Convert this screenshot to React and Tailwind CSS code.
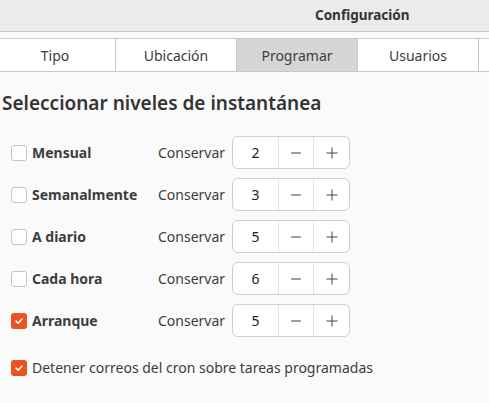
import React from "react";

const rows = [
  { label: "Mensual", value: 2, checked: false },
  { label: "Semanalmente", value: 3, checked: false },
  { label: "A diario", value: 5, checked: false },
  { label: "Cada hora", value: 6, checked: false },
  { label: "Arranque", value: 5, checked: true },
];

function Check({ checked }) {
  return checked ? (
    <div className="w-4 h-4 rounded-[3px] bg-[#e95420] flex items-center justify-center shrink-0">
      <svg width="10" height="10" viewBox="0 0 10 10">
        <path d="M2 5.2 L4.2 7.2 L8 3" fill="none" stroke="white" strokeWidth="1.6" strokeLinecap="round" strokeLinejoin="round" />
      </svg>
    </div>
  ) : (
    <div className="w-4 h-4 rounded-[3px] border border-[#c4c4c4] bg-white shrink-0" />
  );
}

export default function App() {
  return (
    <div className="w-[489px] h-[403px] bg-[#fafafa] text-[#3d3d3d] overflow-hidden" style={{ fontFamily: '"Noto Sans", "Open Sans", sans-serif' }}>
      <div className="h-[32px] bg-[#ebebeb] border-b border-[#c8c8c8] flex items-center pl-[315px] text-[13.5px] font-bold text-[#333]">
        Configuración
      </div>
      <div className="h-[7px] bg-[#fafafa] border-b border-[#c8c8c8]" />
      <div className="h-[33px] flex ml-[-5px] border-b border-[#c8c8c8] bg-white">
        {["Tipo", "Ubicación", "Programar", "Usuarios", ""].map((t, i) => (
          <div
            key={i}
            className={`w-[121px] shrink-0 border-r border-[#c8c8c8] flex items-center justify-center text-[14px] ${i === 2 ? "bg-[#d6d6d6]" : "bg-white"}`}
          >
            {t}
          </div>
        ))}
      </div>
      <div className="pl-[2px] pt-[18px] text-[19px] font-semibold leading-[26px] text-[#333]">
        Seleccionar niveles de instantánea
      </div>
      <div className="flex flex-col gap-[9px] mt-[20px] pl-[11px]">
        {rows.map((r) => (
          <div key={r.label} className="flex items-center h-[33px]">
            <Check checked={r.checked} />
            <span className="ml-[5px] w-[126px] text-[14px] font-bold">{r.label}</span>
            <span className="w-[74px] text-[14px]">Conservar</span>
            <div className="flex h-[33px] w-[118px] border border-[#cfcfcf] rounded-[6px] bg-white text-[14px]">
              <div className="w-[46px] flex items-center justify-center text-[#222] border-r border-[#e4e4e4]">{r.value}</div>
              <div className="w-[35px] flex items-center justify-center border-r border-[#e4e4e4]">
                <svg width="12" height="12" viewBox="0 0 12 12"><path d="M1 6 H11" stroke="#444" strokeWidth="1" /></svg>
              </div>
              <div className="flex-1 flex items-center justify-center">
                <svg width="12" height="12" viewBox="0 0 12 12"><path d="M0.5 6 H11.5 M6 0.5 V11.5" stroke="#444" strokeWidth="1" /></svg>
              </div>
            </div>
          </div>
        ))}
      </div>
      <div className="flex items-center pl-[11px] mt-[20px]">
        <Check checked />
        <span className="ml-[5px] text-[14px]">Detener correos del cron sobre tareas programadas</span>
      </div>
    </div>
  );
}
